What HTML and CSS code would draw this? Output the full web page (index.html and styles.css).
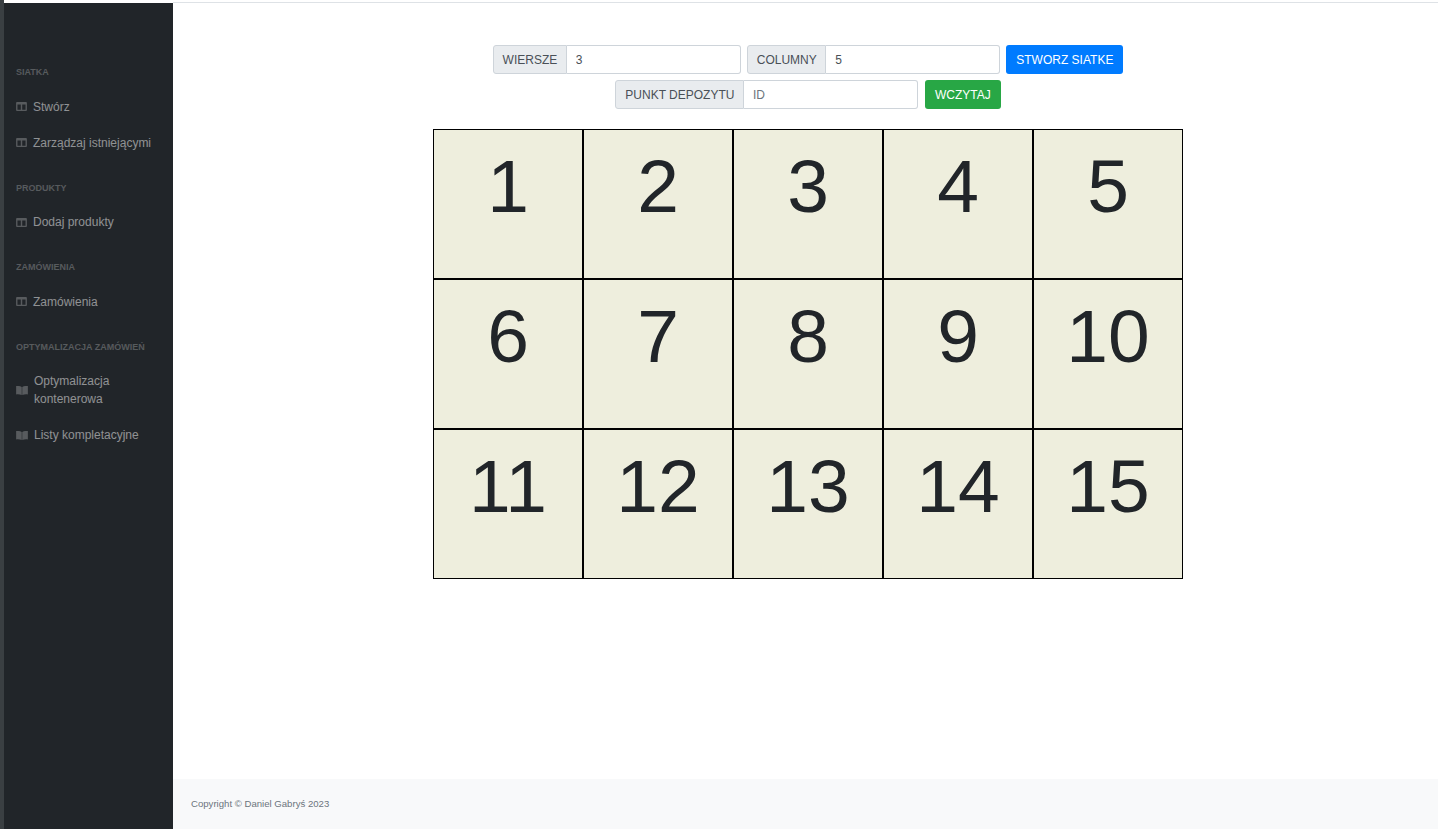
FILE: index.html
```html
<!DOCTYPE html>
<html lang="en">
<head>
  <meta charset="UTF-8" />
  <meta name="viewport" content="width=device-width, initial-scale=1.0" />
  <title>Siatka</title>
  <link rel="stylesheet" href="styles.css">
</head>
<body>
  <div class="strip"></div>
  <nav class="sidebar">
    <div class="nav-heading">Siatka</div>
    <a class="nav-link" href="#">
      <svg class="nav-icon" viewBox="0 0 12 10"><path fill-rule="evenodd" d="M1 0h10a1 1 0 0 1 1 1v8a1 1 0 0 1-1 1H1a1 1 0 0 1-1-1V1a1 1 0 0 1 1-1zm.5 2.8v5.7h3.7V2.8zm5.3 0v5.7h3.7V2.8z"/></svg>
      <span>Stwórz</span>
    </a>
    <a class="nav-link" href="#">
      <svg class="nav-icon" viewBox="0 0 12 10"><path fill-rule="evenodd" d="M1 0h10a1 1 0 0 1 1 1v8a1 1 0 0 1-1 1H1a1 1 0 0 1-1-1V1a1 1 0 0 1 1-1zm.5 2.8v5.7h3.7V2.8zm5.3 0v5.7h3.7V2.8z"/></svg>
      <span>Zarządzaj istniejącymi</span>
    </a>
    <div class="nav-heading">Produkty</div>
    <a class="nav-link" href="#">
      <svg class="nav-icon" viewBox="0 0 12 10"><path fill-rule="evenodd" d="M1 0h10a1 1 0 0 1 1 1v8a1 1 0 0 1-1 1H1a1 1 0 0 1-1-1V1a1 1 0 0 1 1-1zm.5 2.8v5.7h3.7V2.8zm5.3 0v5.7h3.7V2.8z"/></svg>
      <span>Dodaj produkty</span>
    </a>
    <div class="nav-heading">Zamówienia</div>
    <a class="nav-link" href="#">
      <svg class="nav-icon" viewBox="0 0 12 10"><path fill-rule="evenodd" d="M1 0h10a1 1 0 0 1 1 1v8a1 1 0 0 1-1 1H1a1 1 0 0 1-1-1V1a1 1 0 0 1 1-1zm.5 2.8v5.7h3.7V2.8zm5.3 0v5.7h3.7V2.8z"/></svg>
      <span>Zamówienia</span>
    </a>
    <div class="nav-heading">Optymalizacja zamówień</div>
    <a class="nav-link" href="#">
      <svg class="nav-icon book" viewBox="0 0 13 10"><path d="M0 0C2.2-.2 4.6 .1 6.2 1V10C4.4 9.3 2 9.1 0 9.4zM13 0C10.8-.2 8.4 .1 6.8 1V10c1.8-.7 4.2-.9 6.2-.6z"/></svg>
      <span>Optymalizacja kontenerowa</span>
    </a>
    <a class="nav-link" href="#">
      <svg class="nav-icon book" viewBox="0 0 13 10"><path d="M0 0C2.2-.2 4.6 .1 6.2 1V10C4.4 9.3 2 9.1 0 9.4zM13 0C10.8-.2 8.4 .1 6.8 1V10c1.8-.7 4.2-.9 6.2-.6z"/></svg>
      <span>Listy kompletacyjne</span>
    </a>
  </nav>
  <div class="main">
    <div class="content">
      <form class="toolbar">
        <div class="input-group">
          <span class="group-label">Wiersze</span>
          <input class="group-input" type="text" value="3">
        </div>
        <div class="input-group">
          <span class="group-label">Columny</span>
          <input class="group-input" type="text" value="5">
        </div>
        <button class="btn btn-blue" type="button">Stworz siatke</button>
      </form>
      <form class="toolbar">
        <div class="input-group">
          <span class="group-label">Punkt depozytu</span>
          <input class="group-input" type="text" placeholder="ID">
        </div>
        <button class="btn btn-green" type="button">Wczytaj</button>
      </form>
      <div class="grid">
        <div class="cell">1</div>
        <div class="cell">2</div>
        <div class="cell">3</div>
        <div class="cell">4</div>
        <div class="cell">5</div>
        <div class="cell">6</div>
        <div class="cell">7</div>
        <div class="cell">8</div>
        <div class="cell">9</div>
        <div class="cell">10</div>
        <div class="cell">11</div>
        <div class="cell">12</div>
        <div class="cell">13</div>
        <div class="cell">14</div>
        <div class="cell">15</div>
      </div>
    </div>
    <footer class="footer">Copyright © Daniel Gabryś 2023</footer>
  </div>
</body>
</html>
```

FILE: styles.css
```css
* {
  box-sizing: border-box;
}
html, body {
  height: 100%;
}
body {
  margin: 0;
  display: flex;
  font-family: 'Liberation Sans', Arial, sans-serif;
  color: #212529;
  background: #fff;
  overflow: hidden;
}
.strip {
  width: 4px;
  flex: none;
  background: #3a3f42;
}
.sidebar {
  width: 169px;
  flex: none;
  margin-top: 3px;
  padding: 42px 0 0 12px;
  background: #212529;
}
.nav-heading {
  padding: 21px 0 9.5px;
  font-size: 9px;
  line-height: 13px;
  font-weight: bold;
  text-transform: uppercase;
  color: rgba(255,255,255,0.25);
}
.nav-link {
  display: flex;
  align-items: center;
  padding: 9px 12px 9px 0;
  font-size: 12px;
  line-height: 18px;
  color: rgba(255,255,255,0.5);
  text-decoration: none;
}
.nav-icon {
  flex: none;
  width: 11px;
  height: 9px;
  margin-right: 6px;
  fill: rgba(255,255,255,0.25);
}
.nav-icon.book {
  width: 12px;
}
.main {
  flex: 1;
  min-width: 0;
  display: flex;
  flex-direction: column;
  border-top: 1px solid #dee2e6;
  margin-top: 2px;
}
.content {
  flex: 1;
  padding: 42px 0 0 5px;
}
.toolbar {
  display: flex;
  justify-content: center;
  gap: 6px;
  margin-bottom: 6px;
}
.input-group {
  display: flex;
  height: 29px;
  font-size: 12px;
}
.group-label {
  display: flex;
  align-items: center;
  padding: 0 8.5px 0 9px;
  color: #495057;
  text-transform: uppercase;
  background: #e9ecef;
  border: 1px solid #ced4da;
  border-radius: 3px 0 0 3px;
}
.group-input {
  width: 174px;
  padding: 0 9px;
  font: inherit;
  color: #495057;
  background: #fff;
  border: 1px solid #ced4da;
  border-left: 0;
  border-radius: 0 3px 3px 0;
  outline: 0;
}
.group-input::placeholder {
  color: #6c757d;
}
.btn {
  height: 29px;
  padding: 0 9px;
  font: inherit;
  font-size: 12px;
  color: #fff;
  text-transform: uppercase;
  border: 1px solid transparent;
  border-radius: 3px;
  cursor: pointer;
}
.btn-blue {
  background: #007bff;
}
.btn-green {
  margin-left: 1px;
  background: #28a745;
}
.grid {
  display: grid;
  grid-template-columns: repeat(5, 150px);
  grid-auto-rows: 150px;
  justify-content: center;
  margin-top: 20px;
}
.cell {
  padding-top: 13px;
  font-size: 75px;
  line-height: 86px;
  text-align: center;
  background: #eeeedd;
  border: 1px solid #000;
}
.footer {
  height: 50px;
  display: flex;
  align-items: center;
  padding: 0 18px 2px;
  font-size: 9.6px;
  color: #6c757d;
  background: #f8f9fa;
}
```
